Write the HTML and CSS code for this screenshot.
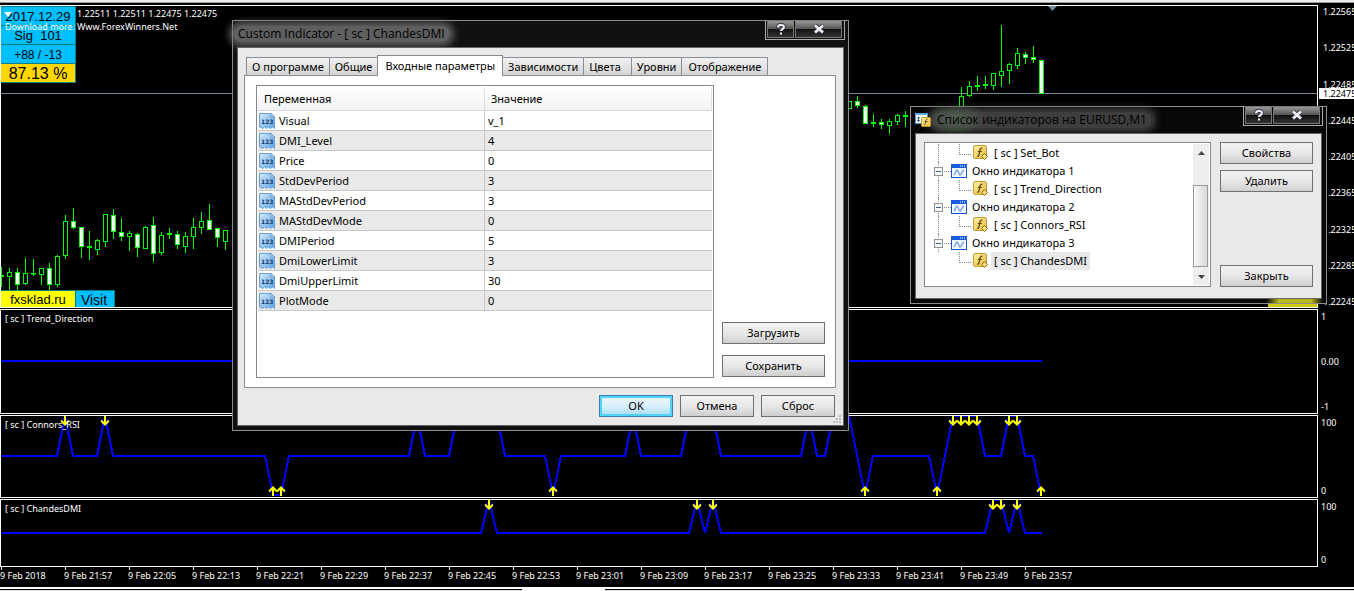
FILE: index.html
```html
<!DOCTYPE html>
<html lang="ru">
<head>
<meta charset="utf-8">
<title>EURUSD,M1</title>
<link rel="stylesheet" href="styles.css">
</head>
<body>
<svg class="sprite" aria-hidden="true">
  <defs>
    <linearGradient id="blueFill" x1="0" y1="0" x2="1" y2="1"><stop offset="0" stop-color="#d4ebfc"/><stop offset="1" stop-color="#5b9fe0"/></linearGradient>
    <linearGradient id="goldFill" x1="0" y1="0" x2="1" y2="1"><stop offset="0" stop-color="#fff3a8"/><stop offset="1" stop-color="#e6b93a"/></linearGradient>
    <symbol id="i-num" viewBox="0 0 16 16">
      <path d="M.5 .5H12L15.500 4V15.500L13.500 14L11.500 15.500L9.500 14L7.500 15.500L5.500 14L3.500 15.500L.5 14Z" fill="url(#blueFill)" stroke="#6ba2d4"/>
      <path d="M12 .5V4H15.500Z" fill="#eaf5ff" stroke="#4f86ba" stroke-width=".8"/>
      <text x="2" y="11" font-family="DejaVu Sans" font-size="6" font-weight="bold" fill="#123a6b">123</text>
    </symbol>
    <symbol id="i-fx" viewBox="0 0 16 16">
      <rect x=".5" y=".5" width="13" height="13" rx="1.500" fill="url(#goldFill)" stroke="#c09a34"/>
      <path d="M9.500 3.500C8 2.700 7.300 3.600 7 5L6 9.500C5.700 11 5 11.500 4 11M4.800 6.300H8.800" fill="none" stroke="#6b4d0c" stroke-width="1.300"/>
      <path d="M11.500 8.500L14.500 11.500L11.500 14.500L8.500 11.500Z" fill="#f9df70" stroke="#8f6a10"/>
    </symbol>
    <symbol id="i-win" viewBox="0 0 16 14">
      <rect x=".5" y=".5" width="15" height="13" fill="#f4f8ff" stroke="#1550d0"/>
      <rect x="0" y="0" width="16" height="4" fill="#1a5ae0"/>
      <path d="M9 1.500h1v1h-1zM11 1.500h1v1h-1zM13 1.500h1v1h-1z" fill="#fff"/>
      <path d="M3 11C4.500 10 4.500 6 6 6S7.500 11 9 11S10.500 7 13 6" fill="none" stroke="#7f9fe8" stroke-width="1.400"/>
    </symbol>
    <symbol id="i-list" viewBox="0 0 16 14">
      <rect x=".5" y=".5" width="12" height="10" fill="#f7fbff" stroke="#4f93cf"/>
      <rect x="0" y="0" width="13" height="2" fill="#5ba6e4"/>
      <path d="M3.500 3.500V9M2 5h3M2 7.500h3M7 5h2" stroke="#47698c"/>
      <rect x="6.500" y="4.500" width="9" height="9" rx="1" fill="url(#goldFill)" stroke="#c29622"/>
      <path d="M12.500 6.500C11 6 11 7 10.500 9S10 12 9 11.500M9.500 8.500h3" fill="none" stroke="#6b4d0c"/>
    </symbol>
    <symbol id="i-help" viewBox="0 0 12 12">
      <path d="M3 4.200C3 1.200 9 1.200 9 4C9 6 6 5.700 6 8" fill="none" stroke="#3a3d50" stroke-width="4"/>
      <path d="M3 4.200C3 1.200 9 1.200 9 4C9 6 6 5.700 6 8M6 9.500V11.500" fill="none" stroke="#f2f2f2" stroke-width="2"/>
    </symbol>
    <symbol id="i-close" viewBox="0 0 12 12">
      <path d="M2 2.500L10 9.500M10 2.500L2 9.500" stroke="#3a3d50" stroke-width="4.500"/>
      <path d="M2 2.500L10 9.500M10 2.500L2 9.500" stroke="#f2f2f2" stroke-width="2.500"/>
    </symbol>
    <symbol id="i-down" viewBox="0 0 9 10"><path d="M4.500 0V9M.5 4.500L4.500 8.500L8.500 4.500" fill="none" stroke="#ff0" stroke-width="2"/></symbol>
    <symbol id="i-up" viewBox="0 0 9 10"><path d="M4.500 10V1M.5 5.500L4.500 1.500L8.500 5.500" fill="none" stroke="#ff0" stroke-width="2"/></symbol>
  </defs>
</svg>

<main class="terminal">
  <div class="toolbar-edge"></div>

  <section class="pane pane-price">
    <div class="plot">
      <svg class="canvas">
        <g transform="translate(-1 -6)">
          <path d="M0 93.500H4000" stroke="#778899"/>
          <path d="M1048 6H1057L1052.500 11Z" fill="#778899"/>
          <g id="candles"></g>
        </g>
      </svg>
      <div class="badges">
        <span class="badge">2017.12.29</span>
        <span class="badge">Sig&nbsp; 101</span>
        <span class="badge badge-small">+88 / -13</span>
        <span class="badge badge-gold">87.13 %</span>
      </div>
      <svg class="marker" viewBox="0 0 8 5"><path d="M0 0H8L4 5Z" fill="#fff"/></svg>
      <p class="quotes">1.22511 1.22511 1.22475 1.22475</p>
      <p class="promo"><span>Download more:</span><span>Www.ForexWinners.Net</span></p>
      <div class="links">
        <a class="link link-site" href="#">fxsklad.ru</a>
        <a class="link link-visit" href="#">Visit</a>
      </div>
      <div class="corner-tag"></div>
    </div>
    <div class="scale scale-price">
      <span>1.22565</span><span>1.22525</span><span>1.22485</span><span>1.22445</span><span>1.22405</span><span>1.22365</span><span>1.22325</span><span>1.22285</span><span>1.22245</span>
      <b class="current">1.22475</b>
    </div>
  </section>

  <section class="pane pane-trend">
    <div class="plot">
      <svg class="canvas"><path d="M0 51H1041" class="series"/></svg>
      <h2 class="pane-name">[ sc ] Trend_Direction</h2>
    </div>
    <div class="scale"><span>1</span><span>0.00</span><span>-1</span></div>
  </section>

  <section class="pane pane-rsi">
    <div class="plot">
      <svg class="canvas"><g transform="translate(-1 -416)">
        <path class="series" d="M1 456H57L65 416L73 456H97L105 416L113 456H265L273 495H281L289 456H409L417 416L425 456H449L457 416H497L505 456H545L553 495L561 456H625L633 416L641 456H681L689 416H713L721 456H801L809 416L817 456H825L833 416H849L865 495L873 456H929L937 495L953 416H977L985 456H1001L1009 416H1017L1025 456H1033L1041 495"/>
        <g id="rsiArrows"></g>
      </g></svg>
      <h2 class="pane-name">[ sc ] Connors_RSI</h2>
    </div>
    <div class="scale"><span>100</span><span>0</span></div>
  </section>

  <section class="pane pane-dmi">
    <div class="plot">
      <svg class="canvas"><g transform="translate(-1 -500)">
        <path class="series" d="M1 533H481L489 500L497 533H689L697 500L705 533L713 500L721 533H985L993 500H1001L1009 533L1017 500L1025 533H1042"/>
        <g id="dmiArrows"></g>
      </g></svg>
      <h2 class="pane-name">[ sc ] ChandesDMI</h2>
    </div>
    <div class="scale"><span>100</span><span>0</span></div>
  </section>

  <div class="times">
    <span>9 Feb 2018</span><span>9 Feb 21:57</span><span>9 Feb 22:05</span><span>9 Feb 22:13</span><span>9 Feb 22:21</span><span>9 Feb 22:29</span><span>9 Feb 22:37</span><span>9 Feb 22:45</span><span>9 Feb 22:53</span><span>9 Feb 23:01</span><span>9 Feb 23:09</span><span>9 Feb 23:17</span><span>9 Feb 23:25</span><span>9 Feb 23:33</span><span>9 Feb 23:41</span><span>9 Feb 23:49</span><span>9 Feb 23:57</span>
  </div>
  <div class="sheet-tabs"><i></i></div>
</main>

<section class="window window-params" role="dialog" aria-labelledby="t1">
  <header class="titlebar">
    <h1 class="title" id="t1">Custom Indicator - [ sc ] ChandesDMI</h1>
    <div class="caption-buttons">
      <button class="caption" aria-label="Справка"><svg><use href="#i-help"/></svg></button>
      <button class="caption caption-close" aria-label="Закрыть окно"><svg><use href="#i-close"/></svg></button>
    </div>
  </header>
  <div class="client">
    <div class="tabs" role="tablist">
      <button class="tab" role="tab">О программе</button>
      <button class="tab" role="tab">Общие</button>
      <button class="tab tab-active" role="tab" aria-selected="true">Входные параметры</button>
      <button class="tab" role="tab">Зависимости</button>
      <button class="tab tab-roomy" role="tab">Цвета</button>
      <button class="tab" role="tab">Уровни</button>
      <button class="tab" role="tab">Отображение</button>
    </div>
    <div class="tab-page">
      <div class="grid-box">
        <table class="params">
          <thead><tr><th>Переменная</th><th>Значение</th></tr></thead>
          <tbody>
            <tr><td><svg class="num"><use href="#i-num"/></svg>Visual</td><td>v_1</td></tr>
            <tr><td><svg class="num"><use href="#i-num"/></svg>DMI_Level</td><td>4</td></tr>
            <tr><td><svg class="num"><use href="#i-num"/></svg>Price</td><td>0</td></tr>
            <tr><td><svg class="num"><use href="#i-num"/></svg>StdDevPeriod</td><td>3</td></tr>
            <tr><td><svg class="num"><use href="#i-num"/></svg>MAStdDevPeriod</td><td>3</td></tr>
            <tr><td><svg class="num"><use href="#i-num"/></svg>MAStdDevMode</td><td>0</td></tr>
            <tr><td><svg class="num"><use href="#i-num"/></svg>DMIPeriod</td><td>5</td></tr>
            <tr><td><svg class="num"><use href="#i-num"/></svg>DmiLowerLimit</td><td>3</td></tr>
            <tr><td><svg class="num"><use href="#i-num"/></svg>DmiUpperLimit</td><td>30</td></tr>
            <tr><td><svg class="num"><use href="#i-num"/></svg>PlotMode</td><td>0</td></tr>
          </tbody>
        </table>
      </div>
      <div class="file-buttons">
        <button class="btn">Загрузить</button>
        <button class="btn">Сохранить</button>
      </div>
    </div>
    <footer class="actions">
      <button class="btn btn-default">OK</button>
      <button class="btn">Отмена</button>
      <button class="btn">Сброс</button>
    </footer>
    <svg class="grip" viewBox="0 0 9 9"><path d="M6 0h2v2h-2zM3 3h2v2h-2zM6 3h2v2h-2zM0 6h2v2h-2zM3 6h2v2h-2zM6 6h2v2h-2z" fill="#bbb"/></svg>
  </div>
</section>

<section class="window window-list" role="dialog" aria-labelledby="t2">
  <header class="titlebar">
    <svg class="app-icon"><use href="#i-list"/></svg>
    <h1 class="title" id="t2">Список индикаторов на EURUSD,M1</h1>
    <div class="caption-buttons">
      <button class="caption" aria-label="Справка"><svg><use href="#i-help"/></svg></button>
      <button class="caption caption-close" aria-label="Закрыть окно"><svg><use href="#i-close"/></svg></button>
    </div>
  </header>
  <div class="client client-list">
    <div class="tree-box">
      <ul class="tree">
        <li class="leaf"><svg class="fx"><use href="#i-fx"/></svg><span>[ sc ] Set_Bot</span></li>
        <li class="node"><button class="toggle" aria-label="Свернуть"></button><svg class="win"><use href="#i-win"/></svg><span>Окно индикатора 1</span></li>
        <li class="leaf"><svg class="fx"><use href="#i-fx"/></svg><span>[ sc ] Trend_Direction</span></li>
        <li class="node"><button class="toggle" aria-label="Свернуть"></button><svg class="win"><use href="#i-win"/></svg><span>Окно индикатора 2</span></li>
        <li class="leaf"><svg class="fx"><use href="#i-fx"/></svg><span>[ sc ] Connors_RSI</span></li>
        <li class="node"><button class="toggle" aria-label="Свернуть"></button><svg class="win"><use href="#i-win"/></svg><span>Окно индикатора 3</span></li>
        <li class="leaf leaf-last"><svg class="fx"><use href="#i-fx"/></svg><span class="selected">[ sc ] ChandesDMI</span></li>
      </ul>
      <div class="scrollbar">
        <button class="arrow" aria-label="Вверх"><svg viewBox="0 0 7 4"><path d="M0 4H7L3.500 0Z"/></svg></button>
        <div class="track"><div class="thumb"></div></div>
        <button class="arrow" aria-label="Вниз"><svg viewBox="0 0 7 4"><path d="M0 0H7L3.500 4Z"/></svg></button>
      </div>
    </div>
    <div class="side-buttons">
      <button class="btn">Свойства</button>
      <button class="btn">Удалить</button>
      <button class="btn btn-end">Закрыть</button>
    </div>
  </div>
</section>
<script src="chart.js"></script>
</body>
</html>
```

FILE: styles.css
```css
* { box-sizing: border-box; }

body {
  margin: 0;
  min-height: 100vh;
  background: #000;
  color: #fff;
  font-family: "Noto Sans", "DejaVu Sans", sans-serif;
  font-size: 11px;
  line-height: 14px;
  overflow: hidden;
}

h1, h2, p, ul { margin: 0; padding: 0; font-weight: normal; }
button { font: inherit; color: #000; padding: 0; }
.sprite { position: absolute; width: 0; height: 0; }

/* chart */
.terminal {
  display: flex;
  flex-direction: column;
  min-height: 100vh;
  font-size: 9px;
  line-height: 12px;
}
.toolbar-edge {
  height: 5px;
  background: linear-gradient(#eee 0 2px, #999 2px 3px, #000 3px);
}
.pane { display: flex; margin-bottom: 1px; }
.pane-price { flex: 1 0 303px; }
.pane-trend { height: 105px; }
.pane-rsi { height: 83px; }
.pane-dmi { height: 68px; margin-bottom: 0; }
.plot {
  flex: 1;
  min-width: 0;
  position: relative;
  border: 1px solid #fff;
}
.canvas { position: absolute; inset: 0; width: 100%; height: 100%; overflow: hidden; }
.series { fill: none; stroke: #00f; stroke-width: 2; shape-rendering: crispEdges; }
.pane-name { position: absolute; left: 4px; top: 3px; font-size: 9px; }

.scale {
  width: 36px;
  padding: 2px 0 1px 3px;
  display: flex;
  flex-direction: column;
  justify-content: space-between;
}
.scale-price { position: relative; padding: 1px 0 0 5px; }
.current {
  position: absolute;
  left: 1px;
  right: 0;
  top: 83px;
  padding-left: 4px;
  background: #fff;
  color: #000;
  font-weight: normal;
  line-height: 11px;
}

.badges { position: absolute; left: 0; top: 0; width: 75px; border-top: 1px solid #008080; }
.badge {
  display: block;
  height: 19px;
  border: solid #008080;
  border-width: 0 1px 1px 0;
  background: #00bfff;
  color: #000;
  font: 13px/20px "Liberation Sans", sans-serif;
  text-align: center;
}
.badge-small { font-size: 12px; }
.badge-gold { background: #ffd700; font-size: 16px; }
.marker { position: absolute; left: 3px; top: 6px; width: 8px; height: 5px; }
.quotes { position: absolute; left: 76px; top: 2px; }
.promo { position: absolute; left: 4px; top: 15px; display: flex; }
.promo span:first-child { width: 72px; white-space: nowrap; }

.links { position: absolute; left: 0; bottom: 0; display: flex; }
.link {
  height: 17px;
  border: solid #008080;
  border-width: 1px 1px 0 0;
  color: #000;
  font: 13px/18px "Liberation Sans", sans-serif;
  text-align: center;
  text-decoration: none;
}
.link-site { width: 75px; background: #ff0; }
.link-visit { width: 39px; background: #00bfff; font-size: 14px; padding-right: 2px; }
.corner-tag { position: absolute; right: 0; bottom: 0; width: 49px; height: 17px; background: #cc0; }

.times { display: flex; height: 20px; overflow: hidden; }
.times span { flex: none; width: 64px; padding-top: 3px; white-space: nowrap; background: linear-gradient(#fff, #fff) 1px 0 / 1px 3px no-repeat; }
.sheet-tabs { height: 4px; border-top: 2px solid #fff; background: linear-gradient(#000 0 1px, #ddd 1px); padding-left: 522px; }
.sheet-tabs i { display: block; width: 83px; height: 2px; background: #fff; }

/* dialogs */
.window {
  position: absolute;
  display: flex;
  flex-direction: column;
  padding: 0 4px 4px;
  border: 1px solid #8c8c8c;
  background: #111;
  color: #000;
}
.window-params { left: 232px; top: 20px; width: 617px; height: 411px; }
.window-list {
  left: 910px;
  top: 106px;
  width: 417px;
  height: 198px;
  background: radial-gradient(ellipse 30px 16px at 45px 12px, #4c8048, transparent) no-repeat,
    linear-gradient(90deg, transparent 355px, #b8b820 368px 400px, transparent 412px) 0 100% / 100% 5px no-repeat, #080808;
}
.titlebar { display: flex; align-items: center; height: 26px; position: relative; }
.title {
  font: 12px/16px "Open Sans", "Noto Sans", sans-serif;
  padding: 0 5px;
  margin-left: -4px;
  border-radius: 10px;
  background: rgba(115, 115, 115, .8);
  box-shadow: 0 0 7px 4px rgba(115, 115, 115, .8);
}
.app-icon { width: 16px; height: 14px; margin-right: 6px; z-index: 1; }
.window-list .title { margin-left: -5px; background: rgba(85, 85, 85, .7); box-shadow: 0 0 7px 4px rgba(85, 85, 85, .7); }
.caption-buttons {
  position: absolute;
  right: -1px;
  top: -1px;
  display: flex;
  gap: 1px;
  padding: 0 2px 1px 1px;
  border: 1px solid #aaa;
  border-top: 0;
}
.caption {
  display: grid;
  place-items: center;
  width: 27px;
  height: 18px;
  border: 1px solid #777;
  background: linear-gradient(#999, #555 48%, #111 52%, #333);
}
.caption-close { width: 47px; }
.caption svg { width: 12px; height: 12px; }

.client {
  position: relative;
  flex: 1;
  display: flex;
  flex-direction: column;
  padding: 7px 7px 8px 6px;
  border: 1px solid #666;
  background: #e9e9e9;
}
.tabs { display: flex; align-items: flex-end; height: 20px; padding-left: 2px; z-index: 1; }
.tab {
  height: 18px;
  padding: 0 5px;
  border: 1px solid #898c95;
  border-right-width: 0;
  border-bottom: 0;
  background: linear-gradient(#f2f2f2, #d4d4d4);
  white-space: nowrap;
}
.tab:last-child { border-right-width: 1px; padding: 0 6px; }
.tab-active { height: 21px; padding: 0 7px 1px; margin-bottom: -1px; background: #fff; border-right-width: 1px; }
.tab-active + .tab { border-left: 0; }
.tab-roomy { padding-right: 10px; }
.tab-page {
  flex: 1;
  display: flex;
  gap: 8px;
  padding: 9px 10px 9px 11px;
  border: 1px solid #898c95;
  background: #fff;
}
.grid-box { flex: 1; padding: 1px; border: 1px solid #828790; }
.params { width: 100%; border-collapse: separate; border-spacing: 0; table-layout: fixed; }
.params th {
  height: 24px;
  padding: 0 6px;
  text-align: left;
  font-weight: normal;
  border-bottom: 1px solid #d5d5d5;
  border-right: 1px solid #e2e2e2;
  background: linear-gradient(#fff, #f1f2f4);
}
.params th:first-child { width: 227px; }
.params td { height: 20px; padding: 0 3px; border-bottom: 1px solid #c8c8c8; }
.params td:first-child { padding: 0 1px; border-right: 1px solid #c8c8c8; }
.params tr:nth-child(even) td { background: #e9e9e9; }
.num { width: 16px; height: 16px; margin-right: 4px; vertical-align: -4px; }
.file-buttons { width: 103px; display: flex; flex-direction: column; justify-content: flex-end; gap: 11px; padding-bottom: 1px; }
.btn {
  height: 22px;
  border: 1px solid #707070;
  background: linear-gradient(#f2f2f2, #e8e8e8 50%, #cfcfcf);
}
.btn-default { border-color: #3c7fb1; background: linear-gradient(#eaf6fd, #d9f0fc 50%, #a7d9f5); box-shadow: inset 0 0 0 2px #4fd5fa; }
.actions { display: flex; justify-content: flex-end; gap: 7px; padding: 7px 1px 0 0; }
.actions .btn { width: 74px; }
.grip { position: absolute; right: 1px; bottom: 1px; width: 9px; height: 9px; }

.client-list { flex-direction: row; gap: 9px; padding: 8px 8px 11px 8px; }
.tree-box { flex: 1; display: flex; border: 1px solid #828790; background: #fff; }
.tree { flex: 1; list-style: none; padding-top: 1px; }
.tree li { position: relative; display: flex; align-items: center; height: 18px; padding-left: 9px; }
.tree li::before { content: ""; position: absolute; left: 13px; top: 0; height: 18px; border-left: 1px dotted #888; }
.tree .leaf-last::before { display: none; }
.leaf svg { margin-left: 39px; width: 16px; height: 16px; }
.leaf::after { content: ""; position: absolute; left: 34px; top: 0; width: 11px; height: 10px; border: dotted #888; border-width: 0 0 1px 1px; }
.leaf span { padding: 2px 3px; margin-left: 2px; }
.leaf .selected { background: #e9e9e9; }
.toggle {
  position: relative;
  width: 9px;
  height: 9px;
  border: 1px solid #919191;
  background: linear-gradient(#3b5a9c, #3b5a9c) 1px 3px / 5px 1px no-repeat, #f5f5f5;
}
.node svg { width: 16px; height: 14px; margin-left: 8px; margin-right: 5px; }
.node::after { content: ""; position: absolute; left: 19px; top: 9px; width: 7px; border-top: 1px dotted #888; }
.node { white-space: nowrap; }
.scrollbar { display: flex; flex-direction: column; width: 16px; margin: 1px; background: #eee; }
.arrow { display: grid; place-items: center; height: 17px; border: 0; background: none; }
.arrow svg { width: 7px; height: 4px; fill: #444; }
.track { flex: 1; display: flex; align-items: flex-end; padding-bottom: 1px; }
.thumb { width: 15px; height: 82px; border: 1px solid #999; background: linear-gradient(90deg, #f8f8f8, #d8d8d8); }
.side-buttons { width: 93px; display: flex; flex-direction: column; gap: 6px; }
.btn-end { margin-top: auto; }
```

FILE: chart.js
```js
// x, high, low, body top, body bottom, kind: h = hollow, w = filled white, d = doji
const candles = [
  [1,267,287,275,277,'d'],[9,268,290,272,277,'h'],[17,268,290,272,285,'w'],[25,258,285,273,284,'h'],
  [33,259,276,273,274,'d'],[41,268,285,268,275,'h'],[49,263,290,268,285,'w'],[57,255,287,256,285,'h'],
  [65,215,259,221,256,'h'],[73,208,229,221,228,'w'],[81,227,258,227,247,'w'],[89,231,260,246,248,'d'],
  [97,239,255,240,250,'h'],[105,214,247,214,242,'h'],[113,209,239,215,232,'w'],[121,218,241,232,237,'w'],
  [129,231,251,233,237,'h'],[137,233,257,234,248,'w'],[145,226,249,227,249,'h'],[153,217,262,225,254,'w'],
  [161,232,255,235,253,'h'],[169,228,239,233,235,'d'],[177,231,249,234,245,'w'],[185,232,253,236,247,'h'],
  [193,218,249,227,237,'h'],[201,212,234,221,228,'h'],[209,204,230,220,230,'w'],[217,228,247,228,238,'w'],
  [225,230,250,230,242,'h'],[849,101,109,101,109,'h'],[857,96,108,101,106,'w'],[865,105,124,106,124,'w'],
  [873,114,127,122,124,'d'],[881,119,129,122,125,'w'],[889,119,134,121,126,'h'],[897,114,125,115,122,'h'],
  [905,111,127,115,117,'d'],[961,87,107,96,107,'h'],[969,81,97,86,96,'h'],[977,76,91,85,87,'d'],
  [985,76,89,84,86,'d'],[993,73,90,73,86,'h'],[1001,25,87,71,76,'h'],[1009,63,84,64,71,'h'],
  [1017,48,69,53,66,'h'],[1025,52,64,54,58,'w'],[1033,46,63,57,60,'w'],[1041,60,94,60,94,'w']
];
const fills = { h: '#000', w: '#fff', d: '#0f0' };

document.getElementById('candles').innerHTML = candles.map(([x, hi, lo, top, bottom, kind]) =>
  `<path d="M${x + 0.5} ${hi}V${lo}" stroke="#0f0"/>` +
  `<rect x="${x - 1.5}" y="${top + 0.5}" width="4" height="${Math.max(bottom - top - 1, 0.5)}" fill="${fills[kind]}" stroke="#0f0"/>`
).join('');

function arrows(id, icon, xs, y) {
  document.getElementById(id).innerHTML += xs.map(x =>
    `<use href="#${icon}" x="${x - 4.5}" y="${y}" width="9" height="10"/>`).join('');
}
arrows('rsiArrows', 'i-down', [65, 105, 953, 961, 969, 977, 1009, 1017], 416);
arrows('rsiArrows', 'i-up', [273, 281, 553, 865, 937, 1041], 486);
arrows('dmiArrows', 'i-down', [489, 697, 713, 993, 1001, 1017], 500);
```
